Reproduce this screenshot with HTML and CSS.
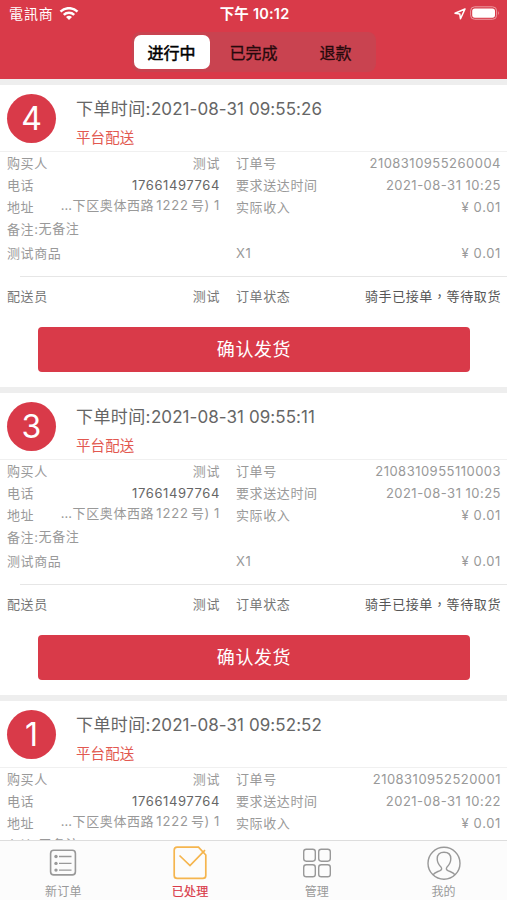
FILE: index.html
```html
<!DOCTYPE html>
<html lang="zh-CN">
<head>
<meta charset="utf-8">
<title>已处理</title>
<link rel="stylesheet" href="styles.css">
</head>
<body>
<div class="app">
  <header class="top">
    <div class="status">
      <div class="carrier"><span>電訊商</span>
        <svg width="20" height="14" viewBox="0 0 20 14" fill="none" stroke="#fff" stroke-width="2.5"><path d="M1.500 4.700a12 12 0 0 1 17 0M4.800 7.900a7.400 7.400 0 0 1 10.400 0"/><path d="M10 13 7 10.100a4.300 4.300 0 0 1 6 0z" fill="#fff" stroke="none"/></svg>
      </div>
      <div class="clock">下午 10:12</div>
      <div class="power">
        <svg width="12" height="12" viewBox="0 0 12 12" fill="none" stroke="#fff" stroke-width="1.5" stroke-linejoin="round"><path d="M11 1 1 5.200l4.800.9.7 4.700z"/></svg>
        <svg width="30" height="15" viewBox="0 0 30 15"><rect x=".6" y=".8" width="26" height="12.500" rx="4" fill="none" stroke="#eb9aa2" stroke-width="1"/><rect x="2.200" y="2.400" width="22.800" height="9.300" rx="2.600" fill="#fff"/><path d="M28 5q1.800 2.100 0 4.200z" fill="#eb9aa2"/></svg>
      </div>
    </div>
    <nav class="segments"><b class="on">进行中</b><b>已完成</b><b>退款</b></nav>
  </header>

  <main class="orders">
    <article class="card">
      <div class="head"><div class="no">4</div><div><h2>下单时间:<span class="stamp">2021-08-31 09:55:26</span></h2><p>平台配送</p></div></div>
      <div class="rows">
        <div class="row"><span>购买人</span><span>测试</span><span>订单号</span><span class="num">2108310955260004</span></div>
        <div class="row"><span>电话</span><span class="tel">17661497764</span><span>要求送达时间</span><span class="num">2021-08-31 10:25</span></div>
        <div class="row"><span>地址</span><span class="addr">…下区奥体西路<i class="door">1222</i>号) 1</span><span>实际收入</span><span class="price">¥ 0.01</span></div>
        <div class="row"><span class="note">备注:<i>无备注</i></span></div>
        <div class="row goods"><span>测试商品</span><span></span><span>X1</span><span class="price">¥ 0.01</span></div>
      </div>
      <div class="row rider"><span>配送员</span><span>测试</span><span>订单状态</span><span class="state">骑手已接单<i class="comma" lang="zh-TW">，</i>等待取货</span></div>
      <button>确认发货</button>
    </article>
    <article class="card">
      <div class="head"><div class="no">3</div><div><h2>下单时间:<span class="stamp">2021-08-31 09:55:11</span></h2><p>平台配送</p></div></div>
      <div class="rows">
        <div class="row"><span>购买人</span><span>测试</span><span>订单号</span><span class="num">2108310955110003</span></div>
        <div class="row"><span>电话</span><span class="tel">17661497764</span><span>要求送达时间</span><span class="num">2021-08-31 10:25</span></div>
        <div class="row"><span>地址</span><span class="addr">…下区奥体西路<i class="door">1222</i>号) 1</span><span>实际收入</span><span class="price">¥ 0.01</span></div>
        <div class="row"><span class="note">备注:<i>无备注</i></span></div>
        <div class="row goods"><span>测试商品</span><span></span><span>X1</span><span class="price">¥ 0.01</span></div>
      </div>
      <div class="row rider"><span>配送员</span><span>测试</span><span>订单状态</span><span class="state">骑手已接单<i class="comma" lang="zh-TW">，</i>等待取货</span></div>
      <button>确认发货</button>
    </article>
    <article class="card">
      <div class="head"><div class="no">1</div><div><h2>下单时间:<span class="stamp">2021-08-31 09:52:52</span></h2><p>平台配送</p></div></div>
      <div class="rows">
        <div class="row"><span>购买人</span><span>测试</span><span>订单号</span><span class="num">2108310952520001</span></div>
        <div class="row"><span>电话</span><span class="tel">17661497764</span><span>要求送达时间</span><span class="num">2021-08-31 10:22</span></div>
        <div class="row"><span>地址</span><span class="addr">…下区奥体西路<i class="door">1222</i>号) 1</span><span>实际收入</span><span class="price">¥ 0.01</span></div>
        <div class="row"><span class="note">备注:<i>无备注</i></span></div>
      </div>
    </article>
  </main>

  <footer class="tabs">
    <div class="tab"><svg width="36" height="36" viewBox="0 0 36 36" fill="none" stroke="#999" stroke-width="1.6"><rect x="5.600" y="5.300" width="24.800" height="24.600" rx="3.200"/><path d="M14 11.500h12.500M14 18.400h12.500M14 25.100h12.500" stroke-width="1.3"/><g fill="#999" stroke="none"><circle cx="11" cy="11.500" r="1.700"/><circle cx="11" cy="18.400" r="1.700"/><circle cx="11" cy="25.100" r="1.700"/></g></svg><span>新订单</span></div>
    <div class="tab active"><svg width="36" height="36" viewBox="0 0 36 36" fill="none" stroke="#f5b54e" stroke-width="1.700"><path d="M26.500 2.200H5.200a3 3 0 0 0-3 3v25.200a3 3 0 0 0 3 3h25.600a3 3 0 0 0 3-3V10z"/><path d="M7.500 10.500 18 20.500 33 5.200"/></svg><span>已处理</span></div>
    <div class="tab"><svg width="36" height="36" viewBox="0 0 36 36" fill="none" stroke="#999" stroke-width="1.400"><rect x="4.700" y="4.200" width="11.600" height="12" rx="2.600"/><rect x="19.700" y="4.200" width="11.600" height="12" rx="2.600"/><rect x="4.700" y="19.800" width="11.600" height="12" rx="2.600"/><rect x="19.700" y="19.800" width="11.600" height="12" rx="2.600"/></svg><span>管理</span></div>
    <div class="tab"><svg width="36" height="36" viewBox="0 0 36 36" fill="none" stroke="#999" stroke-width="1.400"><circle cx="18" cy="18.200" r="16"/><path d="M7 29.900c1.500-2.500 4-2.900 6.700-4.100 2.400-1.100 2.300-2.400 1.200-3.900-2.200-2.200-3.700-4.500-3.700-8.200 0-4.200 2.800-6.500 6.800-6.500s6.800 2.300 6.800 6.500c0 3.700-1.500 6-3.700 8.200-1.100 1.500-1.200 2.800 1.200 3.900 2.700 1.200 5.200 1.600 6.700 4.100"/></svg><span>我的</span></div>
  </footer>
</div>
</body>
</html>
```
FILE: styles.css
```css
* { box-sizing: border-box; }
body { margin: 0; font-family: Inter, "Noto Sans CJK SC", sans-serif; color: #999; background: #fff; }
i { font-style: normal; }
svg { display: block; }
.app { height: 900px; display: flex; flex-direction: column; overflow: hidden; }

.top { flex: none; height: 79px; background: #d93a49; color: #fff; }
.status { height: 27px; padding: 0 7px 0 9px; display: grid; grid-template-columns: 1fr auto 1fr; align-items: center; }
.carrier { display: flex; gap: 5px; align-items: center; font-size: 14px; letter-spacing: .9px; line-height: 27px; }
.clock { font-size: 14.500px; font-weight: 600; line-height: 27px; letter-spacing: .2px; }
.power { display: flex; gap: 4px; justify-content: flex-end; align-items: center; }
.segments { width: 244px; height: 40px; margin: 5px auto 0; padding: 3px 2px; display: grid; grid-template-columns: 76px 1fr 76px; border-radius: 8px; background: #c94350; color: #26090c; }
.segments b { display: flex; align-items: center; justify-content: center; font-size: 16px; font-weight: 400; -webkit-text-stroke: .3px; }
.segments .on { background: #fff; color: #000; border-radius: 7px; -webkit-text-stroke: .5px; }

.orders { flex: 1; min-height: 0; overflow: hidden; }
.card { height: 308px; border-top: 6px solid #eee; }
.head { height: 66px; margin-left: 7px; display: flex; gap: 20px; padding-top: 9px; }
.no { width: 49px; height: 49px; border-radius: 50%; background: #d93a49; color: #fff; font-size: 32px; line-height: 49px; text-align: center; font-weight: 400; }
h2 { margin: 0; height: 30px; line-height: 30px; font-size: 17px; font-weight: 400; color: #666; letter-spacing: .4px; white-space: nowrap; }
.head p { margin: 0; line-height: 28px; font-size: 14.500px; color: #e25850; letter-spacing: .1px; }
.stamp { letter-spacing: .07px; }
.rows { border-top: 1px solid #f0f0f0; }
.row { height: 22px; line-height: 22px; margin: 0 6px 0 7px; display: grid; grid-template-columns: 60px 153px 98px 1fr; font-size: 13px; letter-spacing: .6px; white-space: nowrap; }
.row > :nth-child(2) { justify-self: end; }
.row > :nth-child(3) { margin-left: 16px; }
.row > :nth-child(4) { justify-self: end; }
.row .num { letter-spacing: .48px; }
.row .price { letter-spacing: .65px; }
.row .tel { color: #666; letter-spacing: .6px; }
.addr { margin-top: -2px; }
.door { margin: 0 2px; letter-spacing: .9px; }
.note i { display: inline-block; transform: translateY(-1px); }
.goods { height: 36px; line-height: 26px; }
.rider { height: 40px; line-height: 40px; color: #777; position: relative; }
.rider::before { content: ""; height: 1px; background: #e6e6e6; position: absolute; left: 13px; right: -6px; top: 0; }
.state { color: #555; }
.comma { font-family: "Noto Sans CJK TC", sans-serif; }
button { display: block; width: 432px; height: 45px; margin: 11px 0 0 38px; padding: 0 0 3px; border: 0; border-radius: 4px; background: #d93a49; color: #fff; font: 400 18px "Noto Sans CJK SC", sans-serif; letter-spacing: .6px; }

.tabs { flex: none; height: 60px; border-top: 1px solid #ddd; background: #fcfcfc; display: grid; grid-template-columns: repeat(4, 1fr); }
.tab { padding-top: 4px; display: flex; flex-direction: column; align-items: center; font-size: 12px; line-height: 21px; letter-spacing: .2px; }
.active { color: #d93a49; -webkit-text-stroke: .2px; }
```
